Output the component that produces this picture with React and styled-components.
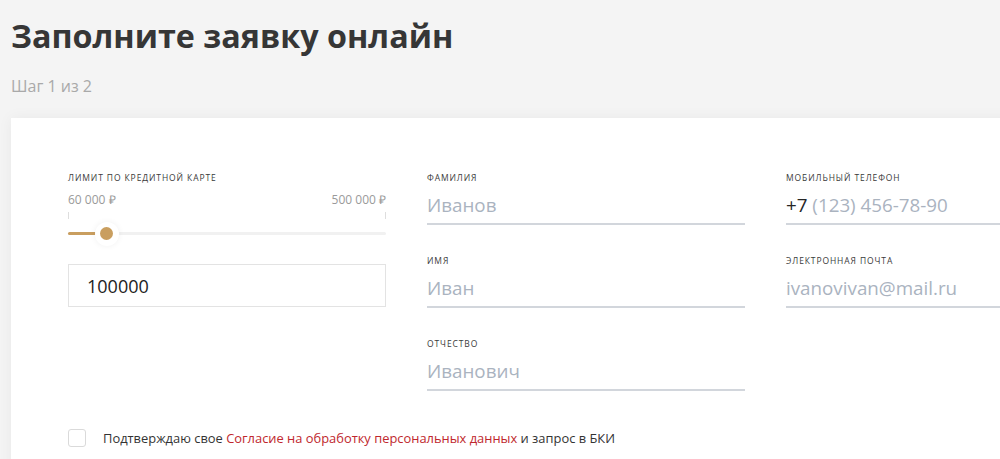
import styled, { createGlobalStyle } from 'styled-components';

const GlobalStyle = createGlobalStyle`
  html, body {
    margin: 0;
    padding: 0;
    background: #f4f4f4;
    overflow: hidden;
  }
  body {
    font-family: 'Open Sans', 'Liberation Sans', sans-serif;
  }
`;

const Page = styled.div`
  padding: 13px 0 0 11px;
  width: 1200px;
`;

const Title = styled.h1`
  margin: 0;
  font-size: 32.3px;
  line-height: 44px;
  font-weight: 700;
  color: #363636;
`;

const Step = styled.div`
  margin-top: 18px;
  font-size: 16px;
  line-height: 22px;
  color: #a9a9a9;
`;

const Card = styled.div`
  margin-top: 21px;
  width: 1150px;
  background: #fff;
  box-shadow: 0 0 14px rgba(0, 0, 0, 0.05);
  padding: 54px 57px 60px;
  box-sizing: border-box;
`;

const Columns = styled.div`
  display: grid;
  grid-template-columns: repeat(3, 318px);
  column-gap: 41px;
  align-items: start;
`;

const Column = styled.div`
  display: flex;
  flex-direction: column;
  gap: 30px;
`;

const Label = styled.div`
  font-size: 8.5px;
  line-height: 12px;
  letter-spacing: 0.9px;
  text-transform: uppercase;
  color: #3a3a3a;
`;

const Field = styled.div`
  display: flex;
  flex-direction: column;
`;

const Value = styled.div`
  margin-top: 8px;
  padding-bottom: 5px;
  font-size: 18.8px;
  line-height: 26px;
  color: #aab3bf;
  border-bottom: 2px solid #d2d6dc;
`;

const Prefix = styled.span`
  color: #262626;
`;

const Range = styled.div`
  margin-top: 8px;
  display: flex;
  justify-content: space-between;
  font-size: 12px;
  line-height: 16px;
  color: #9a9a9a;
`;

const Ticks = styled.div`
  display: flex;
  justify-content: space-between;
  height: 7px;
  margin-top: 4px;
`;

const Tick = styled.span`
  width: 1px;
  background: #dedede;
`;

const Track = styled.div`
  position: relative;
  margin-top: 13px;
  height: 3px;
  background: #f1f1f1;
  border-radius: 2px;
`;

const Fill = styled.div`
  height: 100%;
  background: #c99e5f;
  border-radius: 2px;
`;

const Thumb = styled.span`
  position: absolute;
  top: 50%;
  width: 24px;
  height: 24px;
  margin: -12px 0 0 -12px;
  border-radius: 50%;
  background: #fff;
  box-shadow: 0 0 6px rgba(0, 0, 0, 0.06);
  display: flex;
  align-items: center;
  justify-content: center;

  &::after {
    content: '';
    width: 13px;
    height: 13px;
    border-radius: 50%;
    background: #c99e5f;
  }
`;

const AmountBox = styled.div`
  margin-top: 29px;
  height: 43px;
  border: 1px solid #e3e3e3;
  box-sizing: border-box;
  padding: 0 18px;
  display: flex;
  align-items: center;
  font-size: 18px;
  color: #222;
`;

const Consent = styled.label`
  margin-top: 38px;
  display: flex;
  align-items: center;
  gap: 17px;
  font-size: 12.9px;
  color: #333;
`;

const Box = styled.span`
  width: 18px;
  height: 18px;
  border: 1px solid #dadada;
  border-radius: 3px;
  box-sizing: border-box;
  background: #fff;
`;

const Link = styled.a`
  color: #c0272d;
  text-decoration: none;
`;

const min = 60000;
const max = 500000;
const amount = 100000;
const sliderWidth = 318;
const thumbSize = 24;

function TextField({ label, children }) {
  return (
    <Field>
      <Label>{label}</Label>
      <Value>{children}</Value>
    </Field>
  );
}

export default function App() {
  const ratio = (amount - min) / (max - min);
  const pos = thumbSize / 2 + ratio * (sliderWidth - thumbSize);
  return (
    <>
      <GlobalStyle />
      <Page>
        <Title>Заполните заявку онлайн</Title>
        <Step>Шаг 1 из 2</Step>
        <Card>
          <Columns>
            <Column>
              <Field>
                <Label>Лимит по кредитной карте</Label>
                <Range>
                  <span>60 000 ₽</span>
                  <span>500 000 ₽</span>
                </Range>
                <Ticks>
                  <Tick />
                  <Tick />
                </Ticks>
                <Track>
                  <Fill style={{ width: `${pos}px` }} />
                  <Thumb style={{ left: `${pos}px` }} />
                </Track>
                <AmountBox>{amount}</AmountBox>
              </Field>
            </Column>
            <Column>
              <TextField label="Фамилия">Иванов</TextField>
              <TextField label="Имя">Иван</TextField>
              <TextField label="Отчество">Иванович</TextField>
            </Column>
            <Column>
              <TextField label="Мобильный телефон">
                <Prefix>+7</Prefix> (123) 456-78-90
              </TextField>
              <TextField label="Электронная почта">ivanovivan@mail.ru</TextField>
            </Column>
          </Columns>
          <Consent>
            <Box />
            <span>
              Подтверждаю свое{' '}
              <Link href="#">Согласие на обработку персональных данных</Link> и
              запрос в БКИ
            </span>
          </Consent>
        </Card>
      </Page>
    </>
  );
}
